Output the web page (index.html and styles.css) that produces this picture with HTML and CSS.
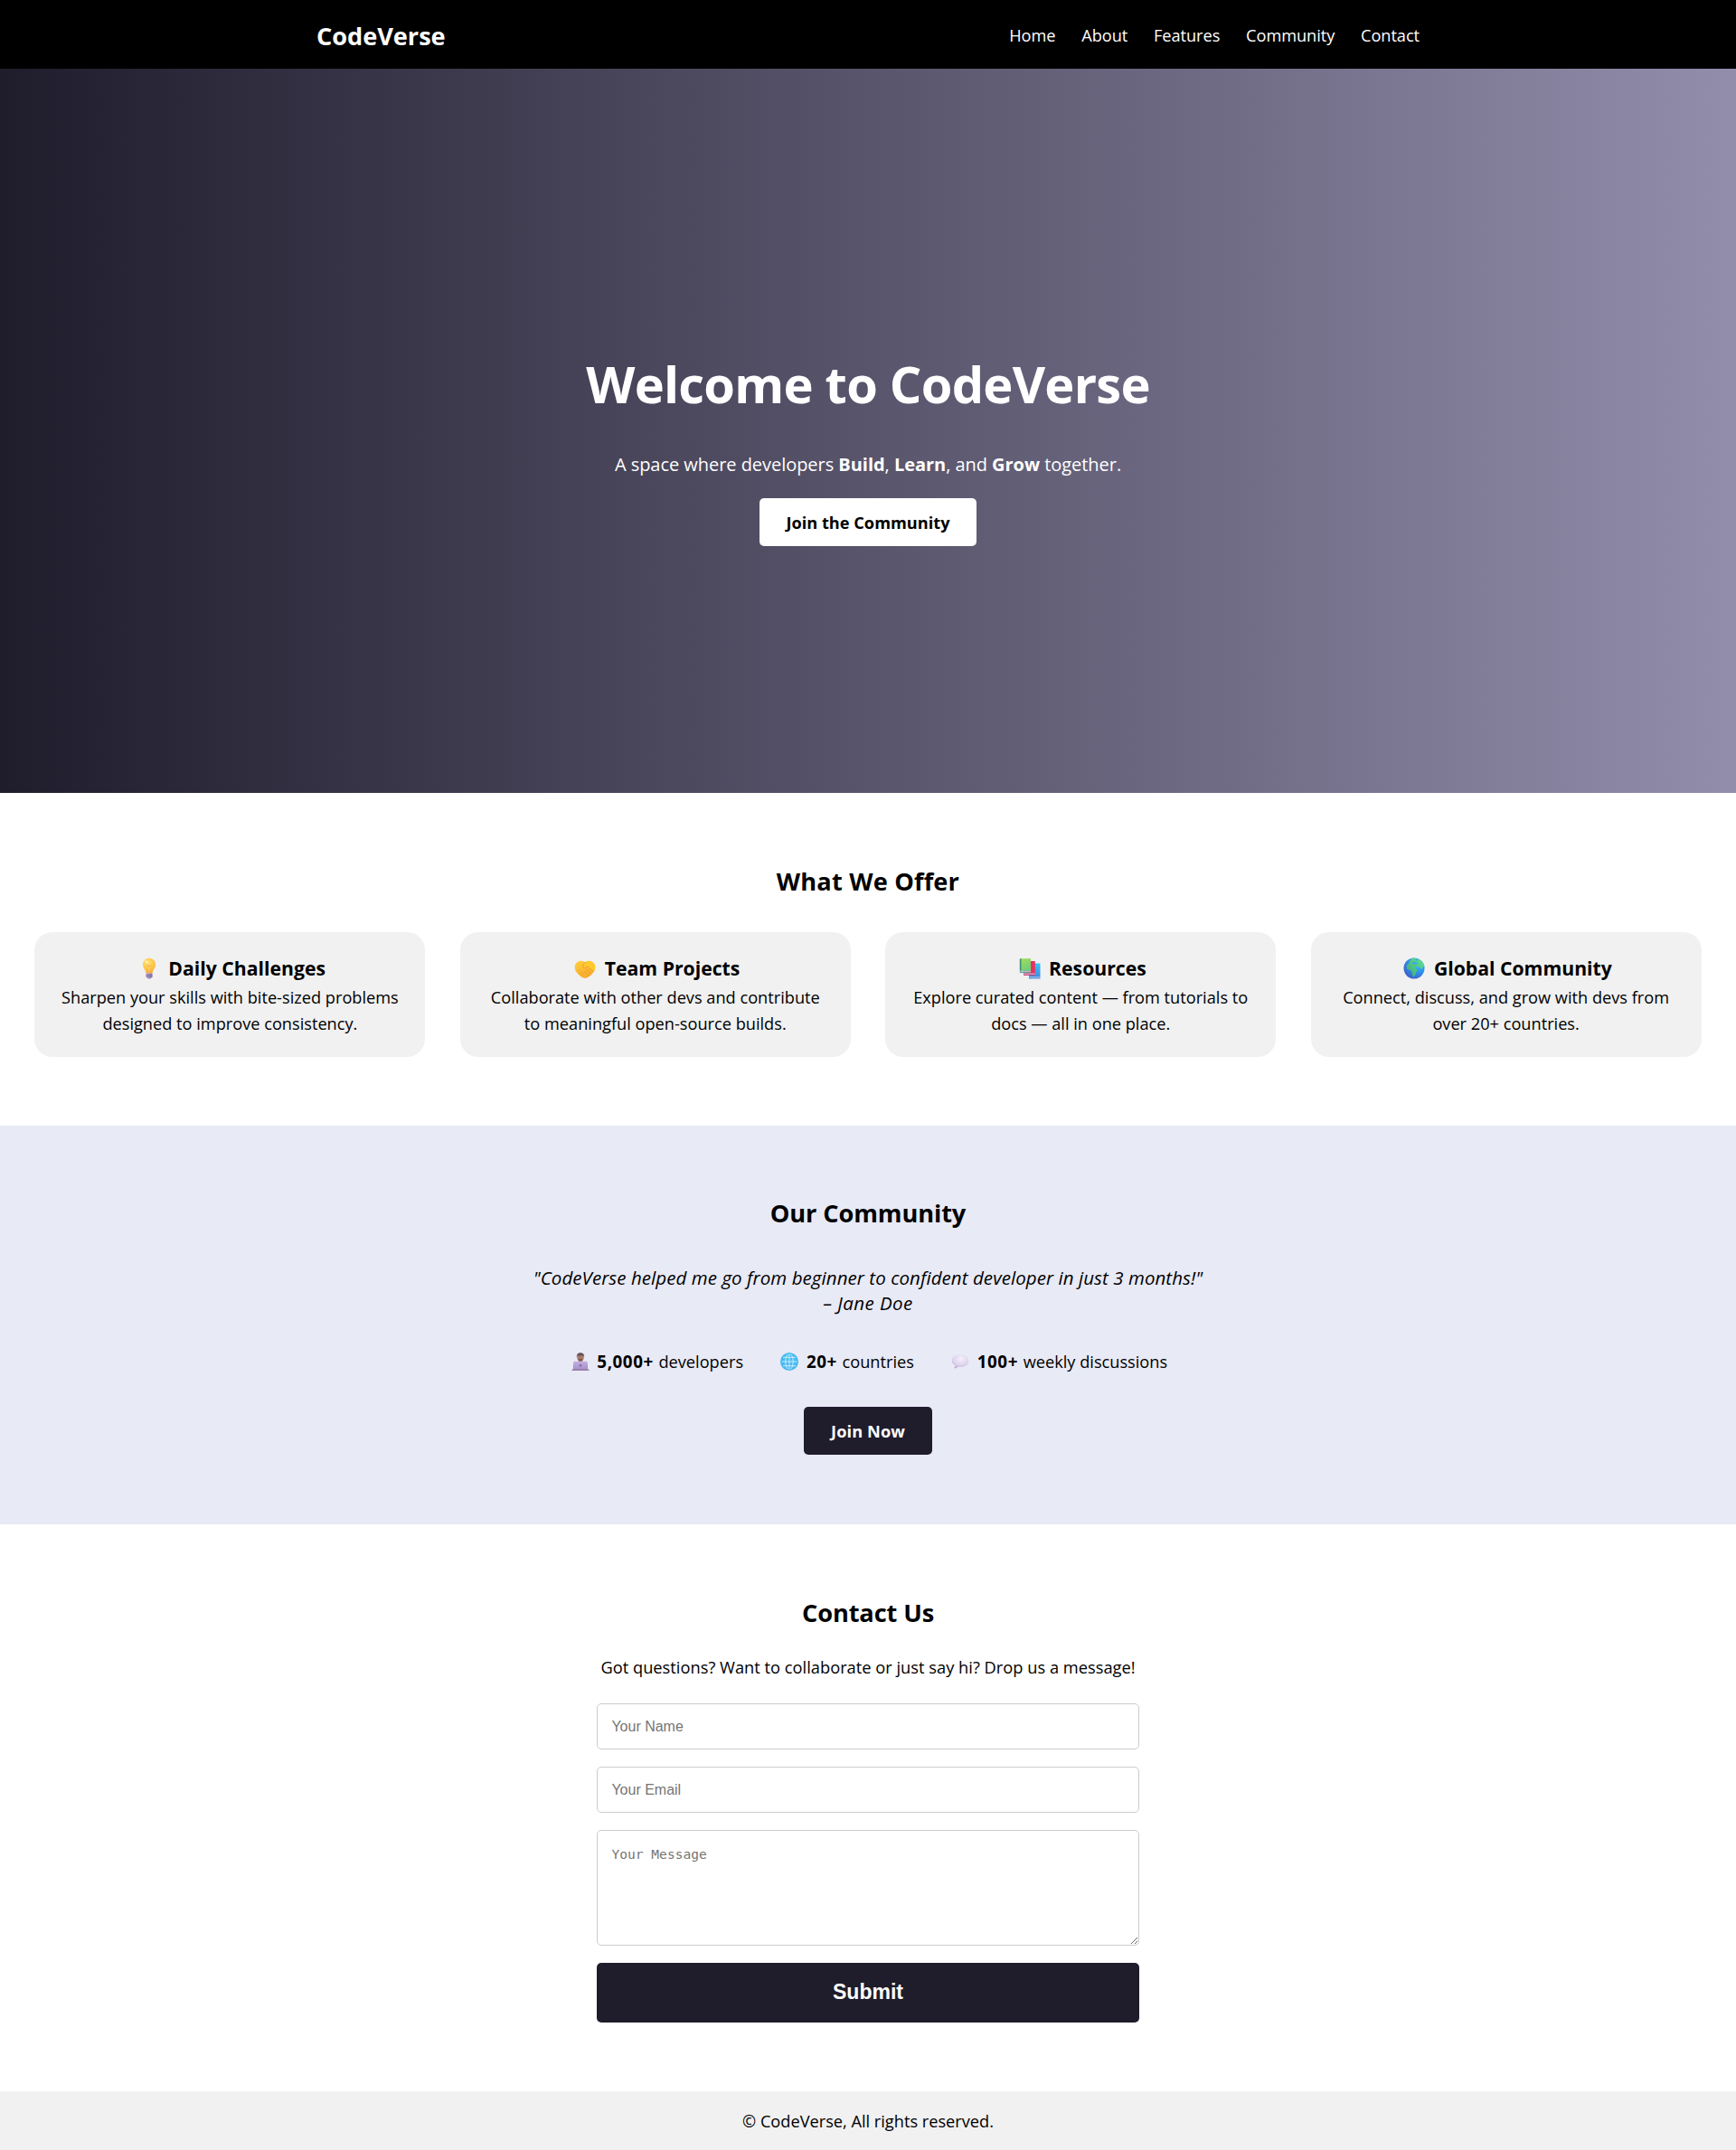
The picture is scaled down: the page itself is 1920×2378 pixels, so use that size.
FILE: index.html
```html
<!DOCTYPE html>
<html lang="en">
<head>
<meta charset="utf-8">
<title>CodeVerse</title>
<link rel="stylesheet" href="styles.css">
</head>
<body>
<header class="header">
  <div class="header-inner">
    <a class="logo">CodeVerse</a>
    <nav class="nav">
      <a>Home</a><a>About</a><a>Features</a><a>Community</a><a>Contact</a>
    </nav>
  </div>
</header>

<section class="hero">
  <h1 class="hero-title">Welcome to CodeVerse</h1>
  <p class="hero-text">A space where developers <b>Build</b>, <b>Learn</b>, and <b>Grow</b> together.</p>
  <a class="btn btn-light">Join the Community</a>
</section>

<section class="features">
  <h2 class="section-title">What We Offer</h2>
  <div class="cards">
    <article class="card">
      <h3 class="card-title">
        <svg class="icon" viewBox="0 0 24 24">
          <defs>
            <radialGradient id="bulb" cx=".42" cy=".35" r=".65"><stop offset="0" stop-color="#ffe27a"/><stop offset=".6" stop-color="#ffcb4c"/><stop offset="1" stop-color="#f5ae45"/></radialGradient>
            <linearGradient id="cap" x1="0" x2="1" y1="0" y2="0"><stop offset="0" stop-color="#b7a3c9"/><stop offset="1" stop-color="#8a75a8"/></linearGradient>
          </defs>
          <path fill="url(#bulb)" d="M12 .8a6.900 6.900 0 0 1 6.900 6.900c0 3.300-1.500 4.600-2.400 6.600-.5 1.100-.8 2.200-1 3.200h-7c-.2-1-.5-2.100-1-3.200-.9-2-2.400-3.300-2.400-6.600A6.900 6.900 0 0 1 12 .8z"/>
          <path fill="none" stroke="#f3a83c" stroke-width=".7" d="M10.500 17.200c0-3-.6-4.300-1.100-5.600a1.700 1.700 0 1 1 2.600-.6 1.700 1.700 0 1 1 2.600.6c-.5 1.300-1.100 2.600-1.100 5.600"/>
          <ellipse cx="9" cy="4.800" rx="2" ry="1.500" fill="#fff3c4" opacity=".8"/>
          <path fill="url(#cap)" d="M8.500 17.500h7v3.700c0 .8-.7 1.300-1.500 1.300l-.5 1h-3l-.5-1c-.8 0-1.500-.5-1.500-1.300z"/>
          <path stroke="#7b6699" stroke-width=".6" d="M8.500 19.300h7M8.500 21h7"/>
        </svg>Daily Challenges</h3>
      <p class="card-text">Sharpen your skills with bite-sized problems<br>designed to improve consistency.</p>
    </article>
    <article class="card">
      <h3 class="card-title">
        <svg class="icon" viewBox="0 0 24 24">
          <defs><linearGradient id="hand" x1="0" x2=".6" y1="0" y2="1"><stop offset="0" stop-color="#ffd03a"/><stop offset="1" stop-color="#f8a92c"/></linearGradient></defs>
          <path fill="url(#hand)" d="M6.400 4c1.800-.4 3.700.2 5.600 1.200C13.900 4.200 15.800 3.600 17.600 4c3.200.7 5.700 3.200 5.700 6.400 0 2.400-.6 4-1.700 5.700-1.300 2-3 3.600-5 5-1.400 1-3 1.900-4.600 1.900s-3.200-.9-4.600-1.900c-2-1.400-3.700-3-5-5C1.300 14.400.7 12.800.7 10.400.7 7.200 3.200 4.700 6.400 4z"/>
          <path fill="#ffc92e" d="M12.300 5.200c2.300-1.400 4.400-1.500 6.300-.8 3 1.100 4.700 3.400 4.700 6.300 0 1.900-.7 3.300-1.700 4.700-2.600-1.800-4.800-3.500-6.500-5.600-1.500.8-3.500 2.200-4.900 1.200-.9-.8 0-3.800 2.100-5.800z"/>
          <path fill="none" stroke="#e8952a" stroke-width=".7" stroke-linecap="round" d="M12.300 5.200c-2.100 2-3 5-2.100 5.800 1.400 1 3.400-.4 4.900-1.200 1.700 2.100 3.900 3.800 6.200 5.400M13.500 13.300l4.300 4M11.300 15.200l4 4M4 15.300l2.300-2.300M6.300 17.500l2.300-2.500M8.700 19.600l2-2.200"/>
        </svg>Team Projects</h3>
      <p class="card-text">Collaborate with other devs and contribute<br>to meaningful open-source builds.</p>
    </article>
    <article class="card">
      <h3 class="card-title">
        <svg class="icon" viewBox="0 0 24 24">
          <defs>
            <linearGradient id="bk1" x1="0" x2=".5" y1="0" y2="1"><stop offset="0" stop-color="#a4dc58"/><stop offset="1" stop-color="#6fce7c"/></linearGradient>
            <linearGradient id="bk3" x1="0" x2="0" y1="0" y2="1"><stop offset="0" stop-color="#3cc3f5"/><stop offset="1" stop-color="#3d8fe0"/></linearGradient>
          </defs>
          <path fill="#3b83cf" d="M11 8h2v15.500h-1c-.6 0-1-.4-1-1z"/>
          <path fill="#a8b8e8" d="M11.500 20.500h12v2.500h-12z"/>
          <path fill="url(#bk3)" d="M12.500 6.500h11v14.800h-11z"/>
          <path fill="#4a8bd8" d="M11.500 22.500h12v1h-12z"/>
          <path fill="#a3376d" d="M5 5h2v14.500H6c-.6 0-1-.4-1-1z"/>
          <path fill="#d5a5c8" d="M5.500 17h12.300v2.300H5.500z"/>
          <path fill="#eb2f5c" d="M7 4h10.800v13.500H7z"/>
          <path fill="#c52b68" d="M5.500 18.900h12.300v.9H5.500z"/>
          <path fill="#3f8f79" d="M.800 2.500C.8 1.700 1.300 1.200 2 1.200h1V17H1.800c-.6 0-1-.4-1-1z"/>
          <path fill="#b8b8d8" d="M1.200 14.500h11.800v2H1.200z"/>
          <path fill="url(#bk1)" d="M2.500 1.200H13v13.600H2.500z"/>
          <path fill="#55a18a" d="M1.200 16.200h11.800v.9H1.200z"/>
        </svg>Resources</h3>
      <p class="card-text">Explore curated content — from tutorials to<br>docs — all in one place.</p>
    </article>
    <article class="card">
      <h3 class="card-title">
        <svg class="icon" viewBox="0 0 24 24">
          <defs>
            <radialGradient id="sea" cx=".7" cy=".25" r=".85"><stop offset="0" stop-color="#35c0f6"/><stop offset=".55" stop-color="#2e8fea"/><stop offset="1" stop-color="#3f5bc4"/></radialGradient>
            <linearGradient id="land" x1="0" x2="1" y1="1" y2="0"><stop offset="0" stop-color="#3fa777"/><stop offset="1" stop-color="#63e29a"/></linearGradient>
          </defs>
          <circle cx="12" cy="12" r="11.500" fill="url(#sea)"/>
          <path fill="url(#land)" d="M8 1.200C12 0 16.500.7 19.800 3.600c2 1.800 3.100 4 3.500 6.300l-1.500.7-1.500 3.200-1.600-2.600-2.200-1-.8 1.900-2-3.400.300 3.500 1.700 1.700-1.600 2.500c-.2 2.500-1.300 4.300-2.900 5-1.200-.4-1.300-3.200-1.500-5.400-.3-1.700-1.600-2.200-3.600-2.200-2-.4-2.700-2.200-2.300-4.200.4-1.600 1.500-2.900 3.400-3.400L6.500 4.500 8.300 3z"/>
          <path fill="#31a7ee" d="M9.500 5.800l3-.9 2.800.9 1 1.300-3.300.3-3.500-.7zM13.500 2l1.800-.5.300 1.500-1.300 1z"/>
        </svg>Global Community</h3>
      <p class="card-text">Connect, discuss, and grow with devs from<br>over 20+ countries.</p>
    </article>
  </div>
</section>

<section class="community">
  <h2 class="section-title">Our Community</h2>
  <blockquote class="quote">"CodeVerse helped me go from beginner to confident developer in just 3 months!"<br><span class="author">– Jane Doe</span></blockquote>
  <div class="stats">
    <div class="stat">
      <svg class="icon-sm" viewBox="0 0 20 20">
        <defs><linearGradient id="lap" x1="0" x2="0" y1="0" y2="1"><stop offset="0" stop-color="#c3aee0"/><stop offset="1" stop-color="#a78fcb"/></linearGradient></defs>
        <path fill="#8f8794" d="M2 19.500V15c0-3 2.500-4.700 5-5h6c2.500.3 5 2 5 5v4.500z"/>
        <path fill="#a87361" d="M8 7.500h4v3.300l-2 1-2-1z"/>
        <ellipse cx="10" cy="5.200" rx="3.700" ry="4.500" fill="#a8776a"/>
        <path fill="#65525a" d="M5.900 5.500C5.300 2 7.300.2 10 .2s4.700 1.800 4.100 5.300L13.300 3.200c-2 .4-4.600.4-6.600 0z"/>
        <path fill="#7d5850" d="M7.800 7.500c1.500-.6 2.900-.6 4.400 0-.3 1.400-1.200 2.100-2.200 2.100S8.100 8.900 7.800 7.500z"/>
        <rect x="2.300" y="9.800" width="15.400" height="9.200" rx="1" fill="url(#lap)"/>
        <circle cx="10" cy="14.300" r="1.300" fill="#8069ad"/>
        <path fill="#8a6e96" d="M.500 18.600h19v1.200H.500z"/>
      </svg><span><b>5,000+</b> developers</span></div>
    <div class="stat">
      <svg class="icon-sm" viewBox="0 0 20 20">
        <defs><linearGradient id="net" x1="0" x2="0" y1="0" y2="1"><stop offset="0" stop-color="#46c2f5"/><stop offset="1" stop-color="#4fb4ee"/></linearGradient></defs>
        <circle cx="10" cy="10" r="9.800" fill="url(#net)"/>
        <g fill="none" stroke="#d3f1fd" stroke-width=".9"><ellipse cx="10" cy="10" rx="4.200" ry="8.800"/><path d="M10 1.200v17.600M1.200 10h17.600M3 5.300h14M3 14.700h14"/></g>
        <circle cx="10" cy="10" r="9.200" fill="none" stroke="#45b8f0" stroke-width="1.200"/>
      </svg><span><b>20+</b> countries</span></div>
    <div class="stat">
      <svg class="icon-sm" viewBox="0 0 20 20">
        <defs><radialGradient id="talk" cx=".55" cy=".3" r=".75"><stop offset="0" stop-color="#f4effa"/><stop offset=".6" stop-color="#e0d5ee"/><stop offset="1" stop-color="#bda9d6"/></radialGradient></defs>
        <path fill="url(#talk)" d="M10 2.300c5.200 0 9.200 2.700 9.200 6.700S15.500 15.800 10.500 15.800c-.8 0-1.600-.1-2.300-.2-1.200 1-2.700 1.800-4.300 1.800-.6 0-.8-.5-.4-.9.600-.7.900-1.500.9-2.400C2 12.900.800 11.200.800 9c0-4 4-6.700 9.200-6.700z"/>
      </svg><span><b>100+</b> weekly discussions</span></div>
  </div>
  <a class="btn btn-dark">Join Now</a>
</section>

<section class="contact">
  <h2 class="section-title">Contact Us</h2>
  <p class="contact-text">Got questions? Want to collaborate or just say hi? Drop us a message!</p>
  <form class="form">
    <input class="field" type="text" placeholder="Your Name">
    <input class="field" type="email" placeholder="Your Email">
    <textarea class="field message" placeholder="Your Message"></textarea>
    <button class="submit" type="button">Submit</button>
  </form>
</section>

<footer class="footer">© CodeVerse, All rights reserved.</footer>
</body>
</html>
```
FILE: styles.css
```css
* { margin: 0; padding: 0; box-sizing: border-box; }

body {
  font-family: "Open Sans", "Noto Sans", sans-serif;
  font-size: 18.2px;
  line-height: 29px;
  color: #000;
  background: #fff;
}

/* Header */
.header { height: 76px; background: #000; color: #fff; }
.header-inner {
  display: flex;
  justify-content: space-between;
  align-items: center;
  width: 1220px;
  height: 76px;
  margin: 0 auto;
}
.logo { padding-top: 2px; font-size: 27.2px; font-weight: 700; line-height: 43px; letter-spacing: -0.05px; }
.nav { display: flex; gap: 28.8px; padding-top: 2px; letter-spacing: -0.05px; }

/* Hero */
.hero {
  display: flex;
  flex-direction: column;
  align-items: center;
  height: 801.4px;
  padding-top: 305px;
  color: #fff;
  background: linear-gradient(to right, #1f1c2c, #928dab);
}
.hero-title { font-size: 56px; line-height: 87px; letter-spacing: -0.76px; }
.hero-text { margin-top: 30px; font-size: 20px; line-height: 32px; letter-spacing: -0.04px; }

.btn {
  display: block;
  height: 53px;
  border-radius: 5px;
  font-weight: 700;
  line-height: 55px;
  text-align: center;
}
.btn-light { width: 240px; margin-top: 21px; background: #fff; color: #000; }
.btn-dark { width: 142px; margin-top: 35.400px; background: #1f1c2c; color: #fff; letter-spacing: 0.1px; }

.section-title { font-size: 27.2px; line-height: 43px; text-align: center; }

/* Features */
.features { height: 367.6px; padding: 75.6px 38.4px 0; }
.features .section-title { letter-spacing: 0.18px; }
.cards { display: grid; grid-template-columns: repeat(4, 1fr); gap: 38.4px; margin-top: 35px; }
.card {
  height: 138px;
  padding-top: 24px;
  border-radius: 20px;
  background: #f1f1f1;
  text-align: center;
}
.card-title {
  display: flex;
  justify-content: center;
  align-items: center;
  font-size: 21.2px;
  line-height: 32px;
}
.icon { width: 24px; height: 24px; margin: 0 9.500px 0 4px; }
.card-text { margin-top: 2px; white-space: nowrap; }

/* Community */
.community {
  display: flex;
  flex-direction: column;
  align-items: center;
  height: 441px;
  padding-top: 75px;
  background: #e8eaf6;
}
.community .section-title { letter-spacing: -0.1px; }
.quote {
  margin-top: 36px;
  font-size: 20.5px;
  font-style: italic;
  line-height: 28px;
  letter-spacing: 0.064px;
  text-align: center;
}
.author { letter-spacing: 0.45px; }
.stats { display: flex; gap: 38.4px; margin-top: 37px; }
.stat { display: flex; align-items: center; }
.stat b { margin-right: 1px; font-size: 18.8px; letter-spacing: 0.55px; }
.stat span { white-space: nowrap; }
.icon-sm { width: 20px; height: 20px; margin: 0 8.500px 0 3px; }

/* Contact */
.contact { height: 627px; padding-top: 76px; }
.contact .section-title { letter-spacing: -0.1px; }
.contact-text { margin-top: 24px; font-size: 18.3px; text-align: center; }
.form { display: flex; flex-direction: column; gap: 19px; width: 600px; margin: 26.400px auto 0; }
.field {
  display: block;
  width: 100%;
  height: 51px;
  padding: 0 15.400px;
  border: 1px solid #ccc;
  border-radius: 5px;
  font: 16px "Liberation Sans", Arial, sans-serif;
  background: #fff;
}
.field::placeholder { color: #757575; }
.message {
  height: 128px;
  padding: 15px 15.400px;
  font: 14.6px/22px "DejaVu Sans Mono", monospace;
  resize: vertical;
}
.submit {
  height: 65.4px;
  padding-bottom: 1px;
  border: 0;
  border-radius: 5px;
  background: #1f1c2c;
  color: #fff;
  font: 700 23px "Liberation Sans", Arial, sans-serif;
}

/* Footer */
.footer { height: 65px; padding-top: 1px; background: #f1f1f1; line-height: 65px; text-align: center; }
```
